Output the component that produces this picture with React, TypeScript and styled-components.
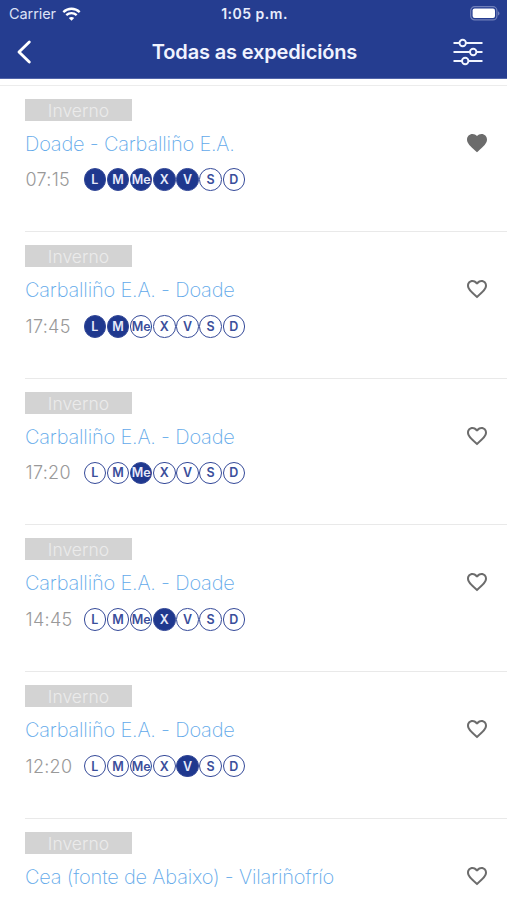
import React from "react";
import styled, { createGlobalStyle } from "styled-components";

const Global = createGlobalStyle`
  * { box-sizing: border-box; }
  html, body { margin: 0; background: #fff; overflow: hidden; }
  body { font-family: Inter, "Liberation Sans", sans-serif; }
`;

const Screen = styled.div`
  height: 900px;
  overflow: hidden;
  background: #fff;
`;

const Header = styled.header`
  height: 79px;
  background: #253d90;
  border-bottom: 1px solid #5265a9;
  color: #fff;
`;

const StatusBar = styled.div`
  display: grid;
  grid-template-columns: 1fr auto 1fr;
  align-items: center;
  height: 27px;
  padding: 0 7px 0 9px;
`;

const Carrier = styled.div`
  display: flex;
  align-items: center;
  gap: 6px;
  font-size: 14.5px;
  letter-spacing: -0.08px;
  color: #dce2f6;
`;

const Clock = styled.div`
  font-size: 14px;
  font-weight: 600;
  letter-spacing: 0.5px;
  color: #e9edfc;
`;

const Battery = styled.div`
  display: flex;
  justify-content: flex-end;
`;

const NavBar = styled.div`
  display: grid;
  grid-template-columns: 52px 1fr 52px;
  align-items: center;
  height: 50px;
  padding: 0 13px 0 15px;
`;

const Title = styled.h1`
  margin: 0;
  text-align: center;
  font-size: 20px;
  line-height: 24px;
  font-weight: 600;
  letter-spacing: -0.15px;
  color: #f0f3ff;
  white-space: nowrap;
`;

const IconButton = styled.button<{ $end?: boolean }>`
  display: flex;
  justify-self: ${(p) => (p.$end ? "end" : "start")};
  padding: 0 ${(p) => (p.$end ? 11 : 0)}px 0 0;
  border: 0;
  background: none;
  color: inherit;
`;

const List = styled.ul`
  list-style: none;
  margin: 6px 0 0;
  padding: 0;
  border-top: 1px solid #ececec;
`;

const Row = styled.li`
  display: flex;
  height: 146.6px;
  margin-left: 25px;
  padding: 13.1px 18px 0 0;
  border-bottom: 1px solid #e9e9e9;

  &:first-child {
    height: 146.2px;
    padding-top: 12.6px;
  }
`;

const Details = styled.div`
  flex: 1;
`;

const Season = styled.div`
  width: 107px;
  height: 22px;
  background: #d3d3d3;
  color: #ebebeb;
  text-align: center;
  font-size: 17.5px;
  font-weight: 300;
  line-height: 23px;
`;

const Route = styled.div`
  height: 24px;
  margin-top: 11px;
  font-size: 20px;
  line-height: 24px;
  font-weight: 200;
  letter-spacing: -0.19px;
  color: #62a9ea;
  white-space: nowrap;
`;

const Schedule = styled.div`
  display: flex;
  align-items: center;
  height: 24px;
  margin-top: 12px;
`;

const Time = styled.span`
  width: 58.5px;
  padding-left: 0.5px;
  font-size: 18px;
  font-weight: 300;
  letter-spacing: 0.3px;
  color: #999;
`;

const Days = styled.div`
  display: flex;
  gap: 0.7px;
`;

const Day = styled.span<{ $active: boolean }>`
  display: flex;
  justify-content: center;
  align-items: center;
  width: 22.5px;
  height: 22.5px;
  border: 1.3px solid #354a99;
  border-radius: 50%;
  background: ${(p) => (p.$active ? "#1f388e" : "#fff")};
  color: ${(p) => (p.$active ? "#e6eafa" : "#3a4e9b")};
  font-size: 12.5px;
  font-weight: 600;
  line-height: 21px;
`;

const Favorite = styled.button`
  display: flex;
  align-self: flex-start;
  margin-top: 32px;
  padding: 0;
  border: 0;
  background: none;
`;

const HEART =
  "M12 21.35l-1.45-1.32C5.4 15.36 2 12.28 2 8.5 2 5.42 4.42 3 7.5 3c1.74 0 3.41.81 4.5 2.09C13.09 3.81 14.76 3 16.5 3 19.58 3 22 5.42 22 8.5c0 3.78-3.4 6.86-8.55 11.54L12 21.35z";
const HEART_OUTLINE =
  "M16.5 3c-1.74 0-3.41.81-4.5 2.09C10.91 3.81 9.24 3 7.5 3 4.42 3 2 5.42 2 8.5c0 3.78 3.4 6.86 8.55 11.54L12 21.35l1.45-1.32C18.6 15.36 22 12.28 22 8.5 22 5.42 19.58 3 16.5 3zm-4.4 15.55l-.1.1-.1-.1C7.14 14.24 4 11.39 4 8.5 4 6.5 5.5 5 7.5 5c1.54 0 3.04.99 3.57 2.36h1.87C13.46 5.99 14.96 5 16.5 5c2 0 3.5 1.5 3.5 3.5 0 2.89-3.14 5.74-7.9 10.05z";

const Heart = ({ filled }: { filled: boolean }) => (
  <svg width="24" height="24" viewBox="0 0 24 24" fill="#6c6c6c">
    <path d={filled ? HEART : HEART_OUTLINE} />
  </svg>
);

const Wifi = () => (
  <svg width="19" height="14" viewBox="0 0 19 14" fill="none" stroke="#fff" strokeWidth="2.3">
    <path d="M1.3 5.1C6 .6 13 .6 17.7 5.1" />
    <path d="M4.3 8.2c3-2.8 7.4-2.8 10.4 0" />
    <path d="M9.5 13.7 6.8 11c1.5-1.5 3.9-1.5 5.4 0z" fill="#fff" stroke="none" />
  </svg>
);

const BatteryIcon = () => (
  <svg width="30" height="15" viewBox="0 0 30 15">
    <rect x=".7" y=".7" width="26.2" height="13.2" rx="4" fill="none" stroke="#7180ba" strokeWidth="1.2" />
    <rect x="2.6" y="2.6" width="22.4" height="9.4" rx="2" fill="#fff" />
    <path d="M28 5.2c2 .8 2 3.5 0 4.3z" fill="#7180ba" />
  </svg>
);

const Chevron = () => (
  <svg width="18" height="26" viewBox="0 0 18 26" fill="none" stroke="#fff" strokeWidth="2.9" strokeLinecap="round" strokeLinejoin="round">
    <path d="M14.3 3 4 13l10.3 10" />
  </svg>
);

const Sliders = () => (
  <svg width="30" height="28" viewBox="0 0 30 28" fill="#253d90" stroke="#f1f5ff" strokeWidth="1.9">
    <path d="M.5 5h29M.5 14h29M.5 23h29" strokeWidth="2.2" />
    <circle cx="9.7" cy="5" r="3.2" />
    <circle cx="20.2" cy="14" r="3.2" />
    <circle cx="12.2" cy="23" r="3.2" />
  </svg>
);

const DAYS = ["L", "M", "Me", "X", "V", "S", "D"];

const TRIPS = [
  { route: "Doade - Carballiño E.A.", time: "07:15", active: [0, 1, 2, 3, 4], favorite: true },
  { route: "Carballiño E.A. - Doade", time: "17:45", active: [0, 1], favorite: false },
  { route: "Carballiño E.A. - Doade", time: "17:20", active: [2], favorite: false },
  { route: "Carballiño E.A. - Doade", time: "14:45", active: [3], favorite: false },
  { route: "Carballiño E.A. - Doade", time: "12:20", active: [4], favorite: false },
  { route: "Cea (fonte de Abaixo) - Vilariñofrío", time: "", active: [], favorite: false },
];

export default function App() {
  return (
    <Screen>
      <Global />
      <Header>
        <StatusBar>
          <Carrier>Carrier <Wifi /></Carrier>
          <Clock>1:05 p.m.</Clock>
          <Battery><BatteryIcon /></Battery>
        </StatusBar>
        <NavBar>
          <IconButton aria-label="Volver"><Chevron /></IconButton>
          <Title>Todas as expedicións</Title>
          <IconButton $end aria-label="Filtros"><Sliders /></IconButton>
        </NavBar>
      </Header>
      <List>
        {TRIPS.map((trip, i) => (
          <Row key={i}>
            <Details>
              <Season>Inverno</Season>
              <Route>{trip.route}</Route>
              {trip.time && (
                <Schedule>
                  <Time>{trip.time}</Time>
                  <Days>
                    {DAYS.map((day, d) => (
                      <Day key={day} $active={(trip.active as number[]).includes(d)}>{day}</Day>
                    ))}
                  </Days>
                </Schedule>
              )}
            </Details>
            <Favorite aria-label="Favorito"><Heart filled={trip.favorite} /></Favorite>
          </Row>
        ))}
      </List>
    </Screen>
  );
}
